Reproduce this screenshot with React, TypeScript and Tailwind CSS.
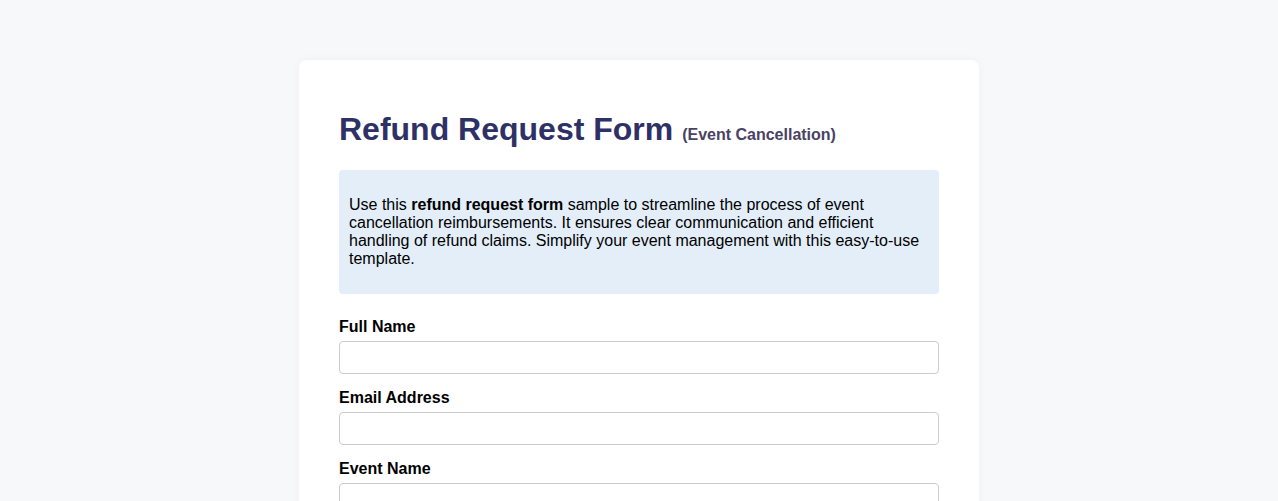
export default function App() {
  const fields = ["Full Name", "Email Address", "Event Name", "Ticket Number", "Reason for Refund"];

  return (
    <div className="min-h-screen bg-[#f7f8fa] pt-[60px] pb-10 font-['Liberation_Sans',Arial,sans-serif] text-black">
      <div className="mx-auto w-[680px] rounded-lg bg-white px-10 pt-[51px] pb-10 shadow-[0_0_10px_rgba(0,0,0,0.04)]">
        <h1 className="mb-[22px] text-[32px] font-bold leading-[37px] text-[#2e3166]">
          Refund Request Form{" "}
          <span className="text-base font-bold text-[#4a4263]">(Event Cancellation)</span>
        </h1>

        <div className="rounded bg-[#e3eef9] px-[10px] py-[10px]">
          <p className="my-4 text-base leading-[18px]">
            Use this <strong>refund request form</strong> sample to streamline the process of event
            cancellation reimbursements. It ensures clear communication and efficient handling of
            refund claims. Simplify your event management with this easy-to-use template.
          </p>
        </div>

        <form className="mt-6">
          {fields.map((label) => (
            <div key={label} className="mb-[15px]">
              <label className="mb-[5px] block text-base font-bold leading-[18px]">{label}</label>
              <input
                type="text"
                className="block h-[33px] w-full rounded border border-[#cccccc] bg-white px-2 text-base outline-none"
              />
            </div>
          ))}
        </form>
      </div>
    </div>
  );
}
